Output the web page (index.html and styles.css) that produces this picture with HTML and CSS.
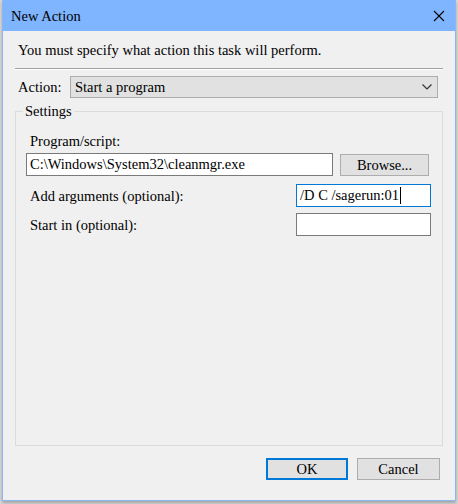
FILE: index.html
```html
<!DOCTYPE html>
<html>
<head>
<meta charset="utf-8">
<link rel="stylesheet" href="styles.css">
</head>
<body>
<div class="window">
  <div class="titlebar">
    <span class="title">New Action</span>
    <svg class="close" width="12" height="12" viewBox="0 0 12 12"><path d="M1 1 L11 11 M11 1 L1 11" stroke="#000" stroke-width="1.1" fill="none"/></svg>
  </div>
  <div class="content">
    <p class="intro">You must specify what action this task will perform.</p>
    <div class="sep"></div>
    <div class="action-row">
      <span class="action-label">Action:</span>
      <div class="select">
        <span>Start a program</span>
        <svg class="chev" width="10" height="6" viewBox="0 0 10 6"><path d="M0.5 0.5 L5 5 L9.5 0.5" stroke="#333" stroke-width="1.2" fill="none"/></svg>
      </div>
    </div>
    <fieldset class="settings">
      <legend>Settings</legend>
      <div class="inner">
        <div class="field-label">Program/script:</div>
        <div class="prog-row">
          <div class="input prog">C:\Windows\System32\cleanmgr.exe</div>
          <div class="btn browse">Browse...</div>
        </div>
        <div class="row">
          <span class="row-label">Add arguments (optional):</span>
          <div class="input small focus">/D C /sagerun:01<span class="caret"></span></div>
        </div>
        <div class="row">
          <span class="row-label">Start in (optional):</span>
          <div class="input small"></div>
        </div>
      </div>
    </fieldset>
    <div class="buttons">
      <div class="btn ok">OK</div>
      <div class="btn cancel">Cancel</div>
    </div>
  </div>
</div>
</body>
</html>
```
FILE: styles.css
```css
html, body {
  margin: 0;
  padding: 0;
}
body {
  background: #d9d9d9;
  width: 458px;
  height: 504px;
  overflow: hidden;
  font-family: "Liberation Serif", "Times New Roman", serif;
  font-size: 14.5px;
  color: #000;
}
.window {
  margin-left: 2px;
  width: 452px;
  height: 500px;
  border: 1px solid #8db7f2;
  border-top: none;
  background: #f0f0f0;
  display: flex;
  flex-direction: column;
  box-shadow: 0 2px 3px rgba(0,0,0,0.25);
}
.titlebar {
  height: 31px;
  background: #7fb4fe;
  display: flex;
  align-items: center;
  justify-content: space-between;
  padding: 0 10px 0 8px;
}
.title {
  line-height: 16px;
}
.close {
  display: block;
}
.content {
  padding: 0 12px;
  flex: 1;
  display: flex;
  flex-direction: column;
}
.intro {
  margin: 11px 0 0 3px;
  line-height: 16px;
}
.sep {
  margin-top: 10px;
  height: 1px;
  background: #a0a0a0;
  border-bottom: 1px solid #ffffff;
}
.action-row {
  margin-top: 6px;
  display: flex;
  align-items: center;
}
.action-label {
  width: 52px;
  padding-left: 3px;
  line-height: 16px;
}
.select {
  flex: 1;
  height: 20px;
  margin-right: 5px;
  background: #e1e1e1;
  border: 1px solid #adadad;
  display: flex;
  align-items: center;
  justify-content: space-between;
  padding: 0 5px 0 4px;
  line-height: 16px;
}
.chev {
  display: block;
}
.settings {
  margin: 5px 0 0 0;
  padding: 0;
  border: 1px solid #dcdcdc;
  height: 343px;
  box-sizing: border-box;
}
.settings legend {
  margin-left: 7px;
  padding: 0 2px;
  line-height: 16px;
}
.inner {
  padding: 14px 11px 0 10px;
}
.field-label {
  padding-left: 4px;
  line-height: 16px;
}
.prog-row {
  margin-top: 4px;
  display: flex;
  align-items: flex-start;
}
.input {
  box-sizing: border-box;
  height: 23px;
  border: 1px solid #7a7a7a;
  background: #fff;
  line-height: 21px;
  padding: 0 3px;
  white-space: nowrap;
  display: flex;
  align-items: center;
}
.prog {
  width: 307px;
}
.btn {
  box-sizing: border-box;
  height: 22px;
  background: #e1e1e1;
  border: 1px solid #adadad;
  display: flex;
  align-items: center;
  justify-content: center;
  line-height: 16px;
}
.browse {
  margin-left: 7px;
  margin-top: 1px;
  width: 89px;
}
.row {
  display: flex;
  align-items: center;
  justify-content: space-between;
  margin-top: 8px;
}
.row + .row {
  margin-top: 6px;
}
.row-label {
  padding-left: 4px;
  line-height: 16px;
}
.small {
  width: 135px;
}
.focus {
  border-color: #0078d7;
}
.caret {
  display: inline-block;
  width: 1px;
  height: 17px;
  background: #000;
  margin-left: 1px;
}
.buttons {
  margin-top: 12px;
  display: flex;
  justify-content: flex-end;
  gap: 9px;
  padding-right: 3px;
}
.ok {
  width: 82px;
  border: 2px solid #0078d7;
}
.cancel {
  width: 83px;
}
```
